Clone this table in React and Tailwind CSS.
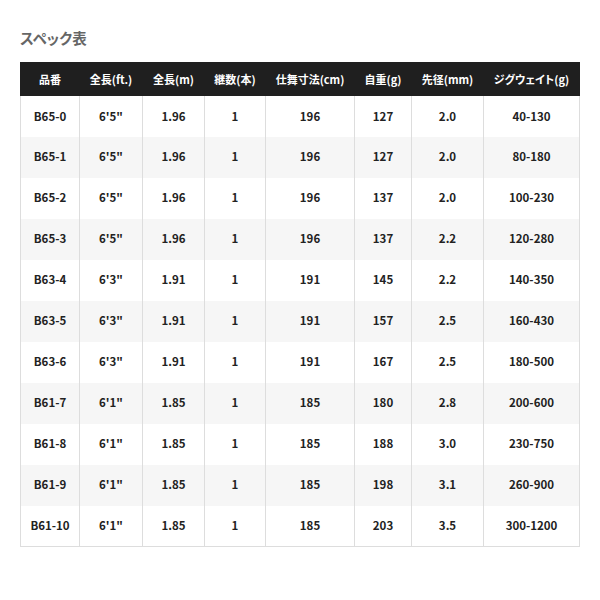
import React from "react";

const rows = [
  ["B65-0", "6'5\"", "1.96", "1", "196", "127", "2.0", "40-130"],
  ["B65-1", "6'5\"", "1.96", "1", "196", "127", "2.0", "80-180"],
  ["B65-2", "6'5\"", "1.96", "1", "196", "137", "2.0", "100-230"],
  ["B65-3", "6'5\"", "1.96", "1", "196", "137", "2.2", "120-280"],
  ["B63-4", "6'3\"", "1.91", "1", "191", "145", "2.2", "140-350"],
  ["B63-5", "6'3\"", "1.91", "1", "191", "157", "2.5", "160-430"],
  ["B63-6", "6'3\"", "1.91", "1", "191", "167", "2.5", "180-500"],
  ["B61-7", "6'1\"", "1.85", "1", "185", "180", "2.8", "200-600"],
  ["B61-8", "6'1\"", "1.85", "1", "185", "188", "3.0", "230-750"],
  ["B61-9", "6'1\"", "1.85", "1", "185", "198", "3.1", "260-900"],
  ["B61-10", "6'1\"", "1.85", "1", "185", "203", "3.5", "300-1200"],
];

const heads = ["品番", "全長(ft.)", "全長(m)", "継数(本)", "仕舞寸法(cm)", "自重(g)", "先径(mm)", "ジグウェイト(g)"];
const widths = [59, 63, 62, 61, 89, 57, 72, 96];

export default function App() {
  return (
    <div
      className="w-[600px] h-[600px] bg-white pt-[27px] pl-[20px]"
      style={{ fontFamily: '"Noto Sans CJK JP", "Noto Sans", sans-serif' }}
    >
      <h2 className="text-[14.5px] leading-[22px] font-bold text-[#666666] [font-feature-settings:'palt']">スペック表</h2>
      <table className="mt-[13px] w-[559px] table-fixed border-collapse border border-[#dddddd] font-bold">
        <colgroup>
          {widths.map((w, i) => (
            <col key={i} style={{ width: w }} />
          ))}
        </colgroup>
        <thead>
          <tr className="h-[33px] bg-[#1f1f1f] text-white text-[11px] [font-feature-settings:'palt']">
            {heads.map((h, i) => (
              <th key={i} className="p-0 text-center font-bold border border-[#1f1f1f] whitespace-nowrap">
                {h}
              </th>
            ))}
          </tr>
        </thead>
        <tbody className="text-[11.5px]">
          {rows.map((r, ri) => (
            <tr key={ri} className={`h-[41px] ${ri % 2 === 1 ? "bg-[#f6f6f6]" : "bg-white"}`}>
              {r.map((c, ci) => (
                <td
                  key={ci}
                  className="p-0 text-center text-[#222222] border-x border-[#dddddd] whitespace-nowrap"
                >
                  {c}
                </td>
              ))}
            </tr>
          ))}
        </tbody>
      </table>
    </div>
  );
}
